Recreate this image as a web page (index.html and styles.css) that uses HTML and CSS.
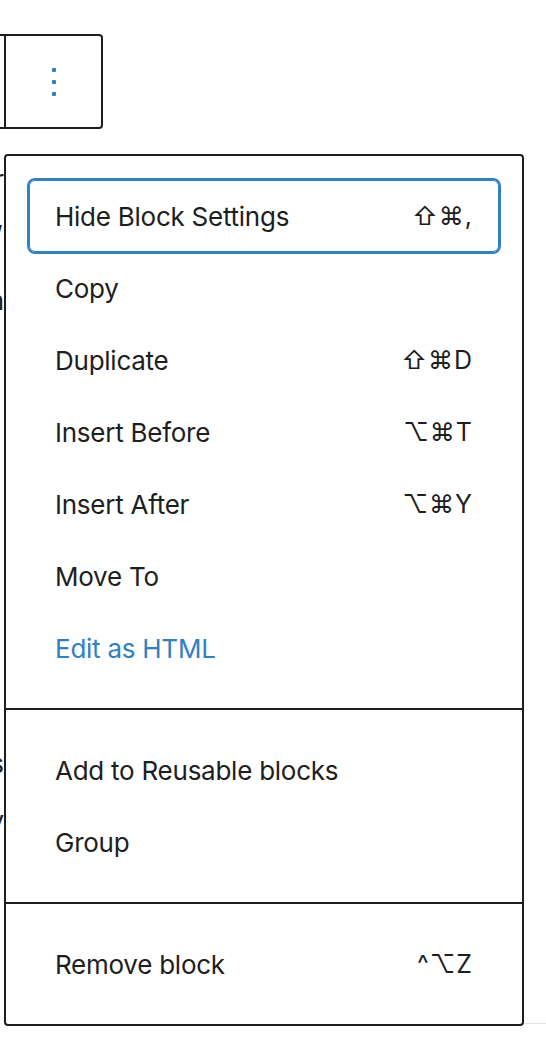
FILE: index.html
```html
<!DOCTYPE html>
<html lang="en">
<head>
<meta charset="utf-8">
<title>Block settings menu</title>
<link rel="stylesheet" href="styles.css">
</head>
<body>
  <div class="toolbar">
    <div class="toolbar-prev"></div>
    <button class="toolbar-btn" aria-label="More options">
      <svg class="dots" width="4" height="28" viewBox="0 0 4 28" aria-hidden="true">
        <rect x="0" y="0" width="4" height="4" rx="1"/>
        <rect x="0" y="12" width="4" height="4" rx="1"/>
        <rect x="0" y="24" width="4" height="4" rx="1"/>
      </svg>
    </button>
  </div>

  <div class="stage">
    <div class="behind">
      <div class="frag frag-1"><span>r</span></div>
      <div class="frag frag-2"><span>,</span></div>
      <div class="frag frag-3"><span>n</span></div>
      <div class="frag frag-4"><span>s</span></div>
      <div class="frag frag-5"><span>y</span></div>
    </div>

    <div class="menu" role="menu">
      <div class="group">
        <div class="item focused"><span class="label">Hide Block Settings</span><span class="kbd">⇧⌘,</span></div>
        <div class="item"><span class="label">Copy</span></div>
        <div class="item"><span class="label">Duplicate</span><span class="kbd">⇧⌘D</span></div>
        <div class="item"><span class="label">Insert Before</span><span class="kbd">⌥⌘T</span></div>
        <div class="item"><span class="label">Insert After</span><span class="kbd">⌥⌘Y</span></div>
        <div class="item"><span class="label">Move To</span></div>
        <div class="item link"><span class="label">Edit as HTML</span></div>
      </div>
      <div class="group">
        <div class="item"><span class="label">Add to Reusable blocks</span></div>
        <div class="item"><span class="label">Group</span></div>
      </div>
      <div class="group">
        <div class="item"><span class="label">Remove block</span><span class="kbd">^⌥Z</span></div>
      </div>
    </div>

    <div class="edge"></div>
  </div>
</body>
</html>
```

FILE: styles.css
```css
* {
  box-sizing: border-box;
}

html, body {
  margin: 0;
  padding: 0;
  background: #ffffff;
}

body {
  width: 546px;
  height: 1046px;
  overflow: hidden;
  font-family: Inter, "Noto Sans", "DejaVu Sans", sans-serif;
  color: #1e1e1e;
}

/* Block toolbar */
.toolbar {
  margin-top: 34px;
  width: 103px;
  height: 95px;
  display: flex;
  border: 2px solid #1e1e1e;
  border-left: none;
  border-radius: 0 4px 4px 0;
}

.toolbar-prev {
  width: 4px;
}

.toolbar-btn {
  flex: 1;
  margin: 0;
  padding: 0;
  background: transparent;
  border: none;
  border-left: 2px solid #1e1e1e;
  display: flex;
  align-items: center;
  justify-content: center;
}

.dots {
  display: block;
  fill: #3380c0;
}

/* Stage: content behind + popover menu */
.stage {
  margin-top: 25px;
  display: flex;
  align-items: flex-end;
}

.behind {
  align-self: flex-start;
  width: 4px;
  flex: none;
  overflow: hidden;
  font-size: 26px;
  line-height: 36px;
  color: #1e1e1e;
}

.frag {
  display: flex;
  justify-content: flex-end;
  white-space: nowrap;
}

.frag-1 { margin-top: 8px; }
.frag-2 { margin-top: 3px; }
.frag-3 { margin-top: 46px; }
.frag-4 { margin-top: 427px; }
.frag-5 { margin-top: 21px; }

.menu {
  flex: none;
  width: 520px;
  border: 2px solid #1e1e1e;
  border-radius: 4px;
  background: #ffffff;
}

.group {
  padding: 24px 23px;
}

.group + .group {
  border-top: 2px solid #1e1e1e;
}

.item {
  height: 72px;
  padding: 0 26px;
  display: flex;
  align-items: center;
  justify-content: space-between;
  font-size: 26px;
  letter-spacing: -0.25px;
  white-space: nowrap;
}

.item.focused {
  border-radius: 6px;
  box-shadow: 0 0 0 2px #3380c0, inset 0 0 0 1px #3380c0;
}

.item.link {
  color: #3380c0;
}

.kbd {
  font-family: Inter, "DejaVu Sans", sans-serif;
  font-size: 25px;
  letter-spacing: 1px;
}

.edge {
  flex: 1;
  margin-bottom: 2px;
  height: 1px;
  background: #e4e4e4;
}
```
